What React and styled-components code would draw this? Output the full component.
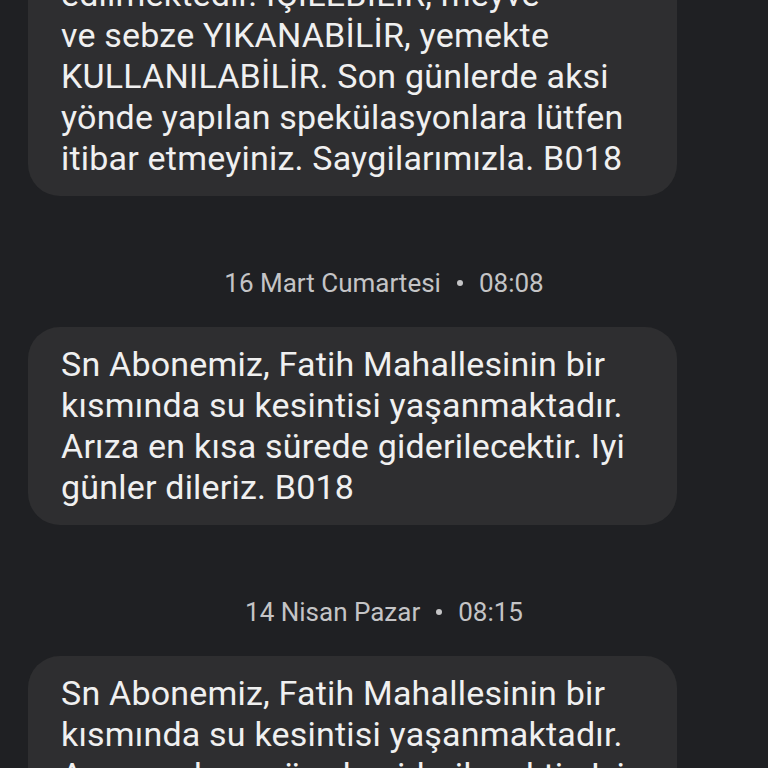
import React from "react";
import styled, { createGlobalStyle } from "styled-components";

const GlobalStyle = createGlobalStyle`
  html, body {
    margin: 0;
    padding: 0;
    background: #1f2023;
  }
  body {
    height: 768px;
    overflow: hidden;
    font-family: "Roboto", "Noto Sans", sans-serif;
    -webkit-font-smoothing: antialiased;
  }
`;

const messages = [
  {
    date: null,
    lines: [
      "Sn Abonemiz, Fatih Mahallesi şebeke",
      "suyumuz düzenli olarak kontrol",
      "edilmektedir. İÇİLEBİLİR, meyve",
      "ve sebze YIKANABİLİR, yemekte",
      "KULLANILABİLİR. Son günlerde aksi",
      "yönde yapılan spekülasyonlara lütfen",
      "itibar etmeyiniz. Saygilarımızla. B018",
    ],
  },
  {
    date: "16 Mart Cumartesi",
    time: "08:08",
    lines: [
      "Sn Abonemiz, Fatih Mahallesinin bir",
      "kısmında su kesintisi yaşanmaktadır.",
      "Arıza en kısa sürede giderilecektir. Iyi",
      "günler dileriz. B018",
    ],
  },
  {
    date: "14 Nisan Pazar",
    time: "08:15",
    lines: [
      "Sn Abonemiz, Fatih Mahallesinin bir",
      "kısmında su kesintisi yaşanmaktadır.",
      "Arıza en kısa sürede giderilecektir. Iyi",
      "günler dileriz. B018",
    ],
  },
];

const App = () => {
  return (
    <>
      <GlobalStyle />
      <Thread>
        {messages.map((m, i) => (
          <Group key={i}>
            {m.date && (
              <DateRow>
                <span>{m.date}</span>
                <Dot />
                <span>{m.time}</span>
              </DateRow>
            )}
            <Bubble>
              {m.lines.map((l, j) => (
                <Line key={j}>{l}</Line>
              ))}
            </Bubble>
          </Group>
        ))}
      </Thread>
    </>
  );
};

const Thread = styled.div`
  display: flex;
  flex-direction: column;
  margin-top: -125px;
  padding-left: 28px;
`;

const Group = styled.div`
  display: flex;
  flex-direction: column;
`;

const DateRow = styled.div`
  display: flex;
  justify-content: center;
  align-items: center;
  gap: 16px;
  width: 768px;
  margin-left: -28px;
  padding: 72px 0 29px;
  height: 30px;
  line-height: 30px;
  font-size: 26px;
  color: #c4c4c6;
`;

const Dot = styled.span`
  width: 6px;
  height: 6px;
  border-radius: 50%;
  background: #c4c4c6;
`;

const Bubble = styled.div`
  width: 649px;
  box-sizing: border-box;
  padding: 17px 33px 17px;
  background: #2e2e30;
  border-radius: 32px;
  color: #f0f0f0;
  font-size: 34px;
  line-height: 41px;
  letter-spacing: 0.2px;
`;

const Line = styled.div`
  white-space: nowrap;
`;

export default App;
